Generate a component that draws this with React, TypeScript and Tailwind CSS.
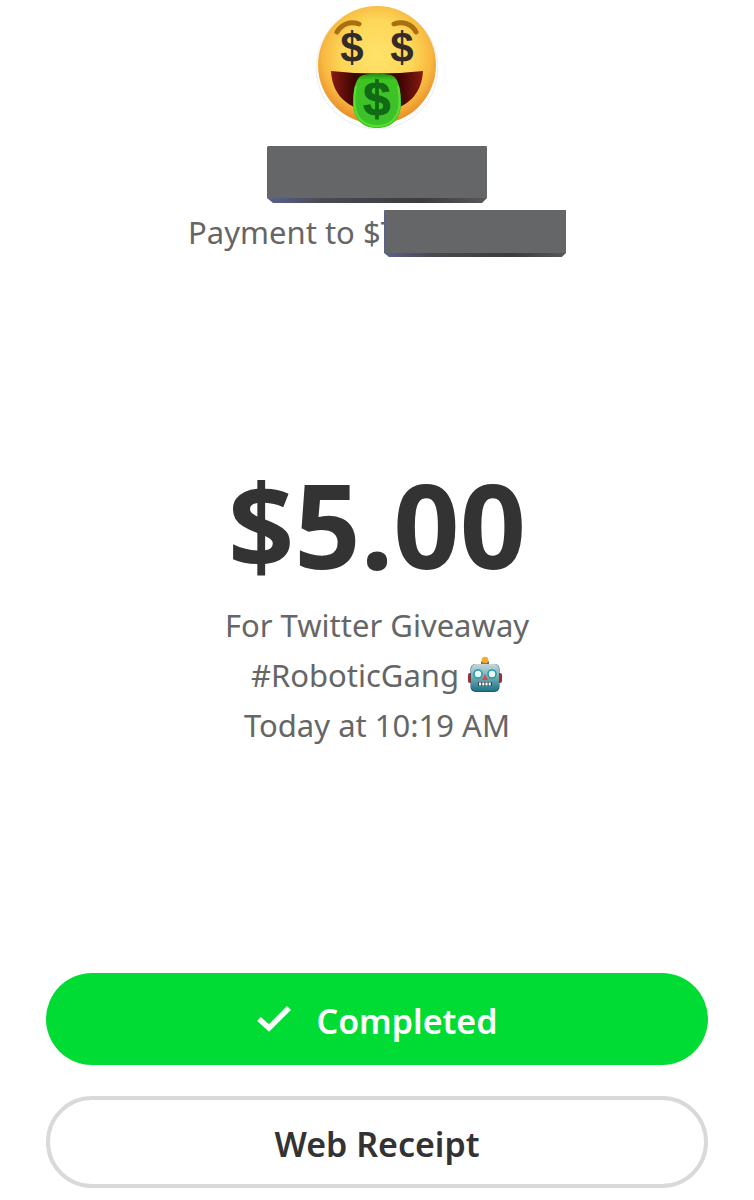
function MoneyFace() {
  return (
    <svg viewBox="1 0 140 136" className="h-[136px] w-[140px]" role="img" aria-label="Money-mouth face">
      <defs>
        <radialGradient id="face" cx="0.5" cy="0.42" r="0.6">
          <stop offset="0" stopColor="#ffe26a" />
          <stop offset="0.5" stopColor="#fdd758" />
          <stop offset="0.76" stopColor="#f8b940" />
          <stop offset="1" stopColor="#e58427" />
        </radialGradient>
        <linearGradient id="mouth" x1="0" x2="1" y1="0" y2="0">
          <stop offset="0" stopColor="#8a1a12" />
          <stop offset="0.25" stopColor="#3d0503" />
          <stop offset="0.75" stopColor="#3d0503" />
          <stop offset="1" stopColor="#8a1a12" />
        </linearGradient>
        <linearGradient id="tongue" x1="0" x2="0" y1="0" y2="1">
          <stop offset="0" stopColor="#1f8c17" />
          <stop offset="0.12" stopColor="#3fc421" />
          <stop offset="0.75" stopColor="#3cc02c" />
          <stop offset="1" stopColor="#3cc41f" />
        </linearGradient>
      </defs>
      <circle cx="71" cy="68" r="61" fill="#fff" stroke="#ececec" strokeWidth="1" />
      <circle cx="71" cy="65" r="59" fill="url(#face)" />
      <path d="M31 32C36 24 44 21 53 24" fill="none" stroke="#a9700f" strokeWidth="5" strokeLinecap="round" />
      <path d="M88 24C97 21 106 24 110 32" fill="none" stroke="#a9700f" strokeWidth="5" strokeLinecap="round" />
      <path d="M25 71Q71 76 117 71C116 93 102 111 71 111C40 111 26 93 25 71Z" fill="url(#mouth)" />
      <path
        d="M57 75Q71 72 85 75C92 77 95 88 95 105C94 121 84 128 71 128C58 128 48 121 47 105C47 88 50 77 57 75Z"
        fill="url(#tongue)"
      />
      <path
        d="M50 86C48 94 48 100 49 108C51 120 60 126 71 126C82 126 91 120 93 108C94 100 94 94 92 86"
        fill="none"
        stroke="#63ee30"
        strokeWidth="2"
        opacity="0.7"
      />
      <g fontFamily="Liberation Sans, sans-serif" fontWeight="700" textAnchor="middle">
        <text x="46" y="62" fontSize="42" fill="#332b27">$</text>
        <text x="96" y="62" fontSize="42" fill="#332b27">$</text>
        <text x="71" y="115" fontSize="49" fill="#116b14" stroke="#116b14" strokeWidth="1">$</text>
      </g>
    </svg>
  );
}

function Robot() {
  return (
    <svg viewBox="0 0 36 38" className="h-[38px] w-9" role="img" aria-label="Robot">
      <defs>
        <linearGradient id="head" x1="0" x2="0" y1="0" y2="1">
          <stop offset="0" stopColor="#c5d8da" />
          <stop offset="0.45" stopColor="#79b0b8" />
          <stop offset="1" stopColor="#1d7486" />
        </linearGradient>
      </defs>
      <rect x="1" y="17" width="5" height="10" rx="2" fill="#a42d33" />
      <rect x="30" y="17" width="5" height="10" rx="2" fill="#a42d33" />
      <rect x="14" y="5" width="8" height="4" rx="1" fill="#6c7284" />
      <circle cx="18" cy="4" r="3.3" fill="#f7ab25" />
      <rect x="3.5" y="8" width="29" height="28" rx="5" fill="#225a68" />
      <rect x="4" y="8" width="28" height="27" rx="5" fill="url(#head)" />
      <circle cx="11" cy="18" r="4" fill="#e8ffff" stroke="#2b9aab" strokeWidth="1.6" />
      <circle cx="25" cy="18" r="4" fill="#e8ffff" stroke="#2b9aab" strokeWidth="1.6" />
      <path d="M18 18L21 24H15Z" fill="#dc4b43" />
      <rect x="11" y="26" width="14" height="4" rx="1" fill="#283e43" />
      <path d="M12 28H24" stroke="#fff" strokeWidth="3" strokeDasharray="2.2 1" />
    </svg>
  );
}

function Redaction({ className }: { className: string }) {
  return (
    <svg viewBox="0 0 220 57" preserveAspectRatio="none" className={className} aria-hidden="true">
      <defs>
        <linearGradient id="edge" x1="0" x2="1" y1="0" y2="0">
          <stop offset="0" stopColor="#596191" />
          <stop offset="0.25" stopColor="#494a52" />
          <stop offset="0.7" stopColor="#3c3c3e" />
          <stop offset="1" stopColor="#58585a" />
        </linearGradient>
      </defs>
      <path d="M0 1L1 0H219L220 1V52L215 57H6L0 52Z" fill="url(#edge)" />
      <path d="M1 0H219L220 1V52H1Z" fill="#656668" />
    </svg>
  );
}

export default function App() {
  return (
    <main className="flex min-h-screen flex-col bg-white px-[46px] pb-3 font-['Noto_Sans',sans-serif] text-[#666]">
      <header className="flex flex-col items-center">
        <MoneyFace />
        <h1 className="mt-[10px]" aria-label="Hidden name">
          <Redaction className="h-[57px] w-[220px]" />
        </h1>
        <div className="mt-[7px] flex h-[47px] items-center">
          <p className="pb-1 text-[31px] leading-[44px]">Payment to $T</p>
          <Redaction className="relative -ml-[14px] h-[47px] w-[182px]" />
        </div>
      </header>

      <section className="flex flex-1 flex-col items-center justify-center pb-4 text-center text-[31px] leading-[50px]">
        <p className="mb-4 text-[116px] leading-[120px] font-bold text-[#333]">$5.00</p>
        <p>For Twitter Giveaway</p>
        <p className="flex items-center gap-2">
          #RoboticGang <Robot />
        </p>
        <p>Today at 10:19 AM</p>
      </section>

      <footer className="flex flex-col gap-[31px]">
        <button
          type="button"
          className="flex h-[92px] items-center justify-center gap-6 rounded-full bg-[#00dc33] pt-1 text-[34px] font-semibold text-white"
        >
          <svg viewBox="0 0 36 28" className="mb-1 h-7 w-9" fill="none" stroke="currentColor" strokeWidth="5.5" aria-hidden="true">
            <path d="M3 14L13 23L33 3" />
          </svg>
          Completed
        </button>
        <button type="button" className="h-[92px] rounded-full border-4 border-[#d9d9d9] pt-1 text-[34px] font-semibold text-[#333]">
          Web Receipt
        </button>
      </footer>
    </main>
  );
}
